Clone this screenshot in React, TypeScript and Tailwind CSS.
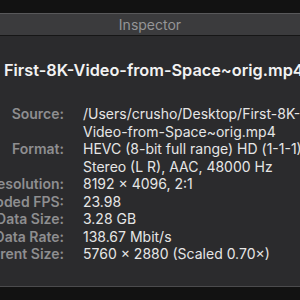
const rows: { label: string; lines: string[] }[] = [
  { label: "Source:", lines: ["/Users/crusho/Desktop/First-8K-", "Video-from-Space~orig.mp4"] },
  { label: "Format:", lines: ["HEVC (8-bit full range) HD (1-1-1)", "Stereo (L R), AAC, 48000 Hz"] },
  { label: "Resolution:", lines: ["8192 × 4096, 2:1"] },
  { label: "Encoded FPS:", lines: ["23.98"] },
  { label: "Data Size:", lines: ["3.28 GB"] },
  { label: "Data Rate:", lines: ["138.67 Mbit/s"] },
  { label: "Current Size:", lines: ["5760 × 2880 (Scaled 0.70×)"] },
];

const App = () => {
  return (
    <div className="w-[300px] h-[300px] overflow-hidden bg-[#121212] flex flex-col font-['Inter',sans-serif]">
      <div className="h-[13px] shrink-0" />
      {/* title bar */}
      <div className="h-[23px] shrink-0 flex items-center justify-center bg-[#3b3b3d] border-t border-[#58585a] border-b border-b-[#161616] text-[14px] text-[#959597]">
        Inspector
      </div>
      <div className="h-[251px] shrink-0 bg-[#2b2b2d] border-b border-[#4b4b4d] flex flex-col">
        <div className="pl-[4px] pt-[24px] text-[16.3px] font-semibold text-[#f2f2f2] whitespace-nowrap leading-[20px]">
          First-8K-Video-from-Space~orig.mp4
        </div>
        <div className="mt-[25px] grid grid-cols-[64px_1fr] gap-x-[19px] text-[14px] leading-[17.5px]">
          {rows.map((row) => (
            <div key={row.label} className="contents">
              <div className="whitespace-nowrap font-semibold text-[#8e8e90] flex justify-end">
                <span>{row.label}</span>
              </div>
              <div className="text-[#e6e6e6] whitespace-nowrap">
                {row.lines.map((line) => (
                  <div key={line}>{line}</div>
                ))}
              </div>
            </div>
          ))}
        </div>
      </div>
    </div>
  );
};

export default App;
